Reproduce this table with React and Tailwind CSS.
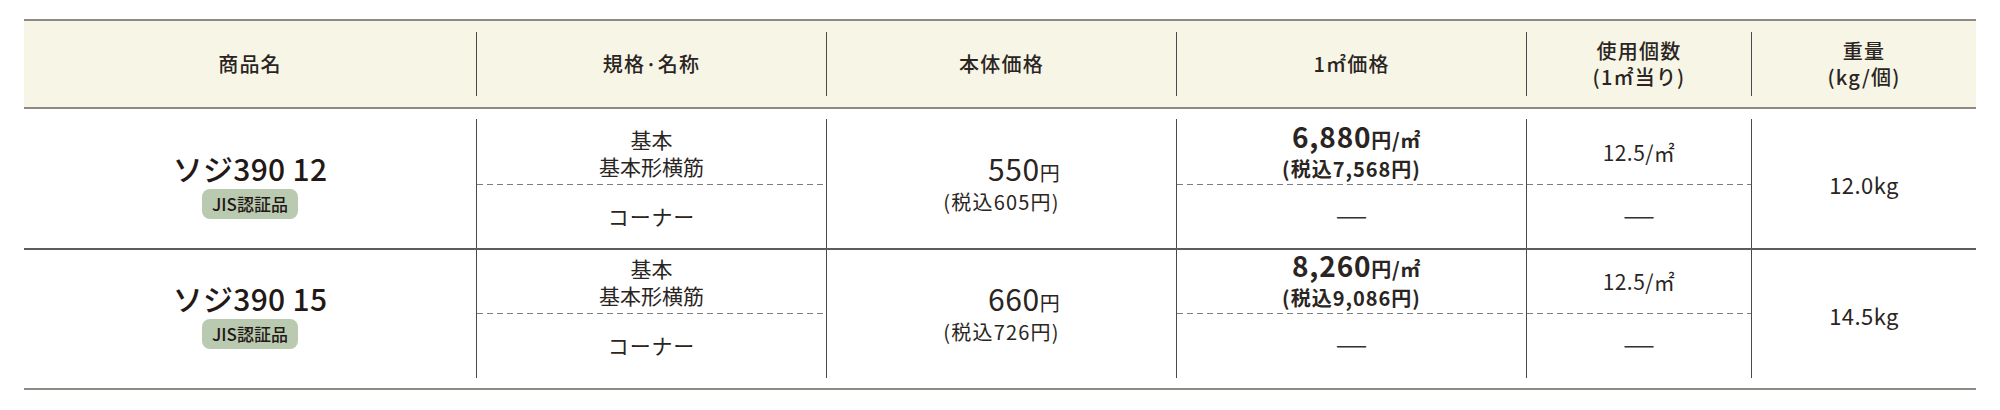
const font = "font-['Noto_Sans_CJK_JP','Noto_Sans',sans-serif]"
const dash = 'h-px bg-[repeating-linear-gradient(90deg,#7e7e7e_0_6px,transparent_6px_10px)]'

const products = [
  { name: 'ソジ390 12', price: '550', tax: '(税込605円)', sqm: '6,880', sqmTax: '(税込7,568円)', count: '12.5/㎡', weight: '12.0kg' },
  { name: 'ソジ390 15', price: '660', tax: '(税込726円)', sqm: '8,260', sqmTax: '(税込9,086円)', count: '12.5/㎡', weight: '14.5kg' },
]

function Divider({ inset }) {
  return <div className={`w-px shrink-0 bg-[#4a4a4a] ${inset}`} />
}

function Bar() {
  return <span className="text-[34px] leading-none text-[#333]">―</span>
}

function HeadCell({ w, first, children }) {
  return (
    <div className={`flex ${w}`}>
      {!first && <Divider inset="my-[11px]" />}
      <div className="flex flex-1 flex-col items-center justify-center text-[20px] font-medium leading-[26px] tracking-[0.06em] text-[#2a2522]">
        {children}
      </div>
    </div>
  )
}

function Split({ top, bottom, first }) {
  const topH = first ? 'h-[75px] pt-[12px]' : 'h-[63px]'
  const botH = first ? 'h-[63px]' : 'h-[74px] pb-[10px]'
  return (
    <div className="flex flex-1 flex-col">
      <div className={`flex items-center justify-center ${topH}`}>{top}</div>
      <div className={dash} />
      <div className={`flex items-center justify-center ${botH}`}>{bottom}</div>
    </div>
  )
}

function Row({ p, first }) {
  const inset = first ? 'mt-[10px]' : 'mb-[10px]'
  const shift = first ? 'pt-[12px]' : 'pb-[8px]'
  return (
    <div className={`flex ${first ? 'h-[141px] border-b-2 border-[#5c5c5c]' : 'h-[140px] border-b-2 border-[#8c8c84]'}`}>
      <div className={`flex w-[452px] flex-col items-center justify-center ${shift}`}>
        <div className="text-[30px] font-medium leading-[34px] tracking-[0.01em] text-[#231815]">{p.name}</div>
        <div className="mt-[4px] flex h-[30px] items-center rounded-[8px] bg-[#b9cab0] px-[10px] text-[17px] font-medium text-[#231815]">
          JIS認証品
        </div>
      </div>

      <div className="flex w-[350px]">
        <Divider inset={inset} />
        <Split
          first={first}
          top={
            <div className="flex flex-col items-center text-[21px] leading-[27px]">
              <span>基本</span>
              <span>基本形横筋</span>
            </div>
          }
          bottom={<span className="text-[21px] tracking-[0.04em]">コーナー</span>}
        />
      </div>

      <div className="flex w-[350px]">
        <Divider inset={inset} />
        <div className={`flex flex-1 items-center justify-center ${shift}`}>
          <div className="flex flex-col items-end">
            <div className="leading-[28px]">
              <span className="text-[30px] tracking-[0.02em]">{p.price}</span>
              <span className="text-[20px]">円</span>
            </div>
            <div className="text-[20px] leading-[28px] tracking-[0.06em]">{p.tax}</div>
          </div>
        </div>
      </div>

      <div className="flex w-[350px]">
        <Divider inset={inset} />
        <Split
          first={first}
          top={
            <div className="flex flex-col items-end font-semibold">
              <div className="leading-[28px]">
                <span className="text-[28px] tracking-[0.03em]">{p.sqm}</span>
                <span className="text-[20px] tracking-[0.03em]">円/㎡</span>
              </div>
              <div className="text-[20px] leading-[28px] tracking-[0.05em]">{p.sqmTax}</div>
            </div>
          }
          bottom={<Bar />}
        />
      </div>

      <div className="flex w-[225px]">
        <Divider inset={inset} />
        <Split first={first} top={<span className="text-[21px] tracking-[0.02em]">{p.count}</span>} bottom={<Bar />} />
      </div>

      <div className="flex w-[225px]">
        <Divider inset={inset} />
        <div className={`flex flex-1 items-center justify-center text-[22px] tracking-[0.02em] ${shift}`}>{p.weight}</div>
      </div>
    </div>
  )
}

export default function App() {
  return (
    <div className={`h-[410px] w-[2000px] bg-white pt-[19px] text-[#2a2522] ${font}`}>
      <div className="mx-[24px] w-[1952px]">
        <div className="flex h-[90px] border-y-2 border-[#8c8c84] bg-[#f7f5e6]">
          <HeadCell w="w-[452px]" first>商品名</HeadCell>
          <HeadCell w="w-[350px]">規格·名称</HeadCell>
          <HeadCell w="w-[350px]">本体価格</HeadCell>
          <HeadCell w="w-[350px]">1㎡価格</HeadCell>
          <HeadCell w="w-[225px]">
            <span>使用個数</span>
            <span>(1㎡当り)</span>
          </HeadCell>
          <HeadCell w="w-[225px]">
            <span>重量</span>
            <span>(kg/個)</span>
          </HeadCell>
        </div>
        {products.map((p, i) => (
          <Row key={p.name} p={p} first={i === 0} />
        ))}
      </div>
    </div>
  )
}
